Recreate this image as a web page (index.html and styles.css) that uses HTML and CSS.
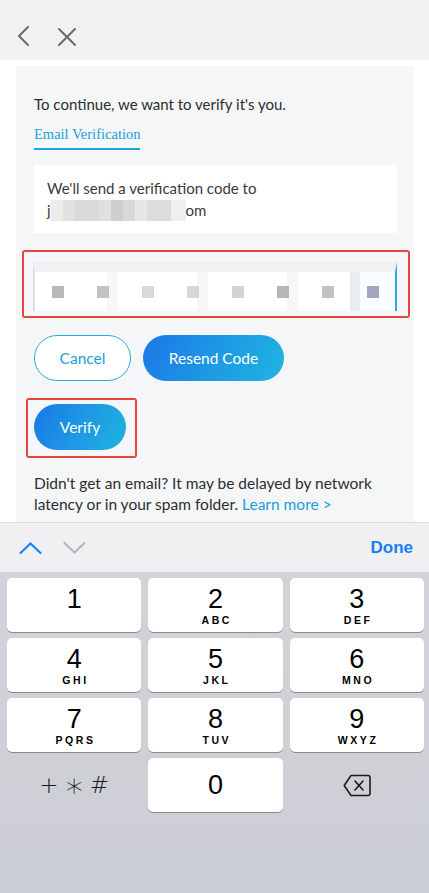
FILE: index.html
```html
<!DOCTYPE html>
<html lang="en">
<head>
    <meta charset="UTF-8">
    <meta name="viewport" content="width=device-width, initial-scale=1.0">
    <title>Verify it's you</title>
    <link rel="stylesheet" href="styles.css">
</head>
<body>

<div class="screen">
    <!-- Barra superior -->
    <header class="topbar">
        <button class="icon-btn" type="button" aria-label="Back">
            <svg width="14" height="22" viewBox="0 0 14 22"><polyline points="12,2 3,11 12,20" fill="none" stroke="#6b6b6b" stroke-width="2" stroke-linecap="round" stroke-linejoin="round"/></svg>
        </button>
        <button class="icon-btn" type="button" aria-label="Close">
            <svg width="20" height="20" viewBox="0 0 20 20"><path d="M2 2 L18 18 M18 2 L2 18" fill="none" stroke="#6b6b6b" stroke-width="2" stroke-linecap="round"/></svg>
        </button>
    </header>

    <main class="content">
        <div class="card">
            <p class="intro">To continue, we want to verify it's you.</p>
            <div class="tabs">
                <span class="tab active">Email Verification</span>
            </div>

            <div class="notice">
                <p>We'll send a verification code to</p>
                <p>j<span class="blurred"></span>om</p>
            </div>

            <!-- Campo del código -->
            <div class="highlight code-box">
                <div class="code">
                    <div class="cell"><span class="dot d1"></span></div>
                    <div class="cell alt"><span class="dot d2"></span></div>
                    <div class="cell"><span class="dot d3"></span></div>
                    <div class="cell alt"><span class="dot d4"></span></div>
                    <div class="cell"><span class="dot d5"></span></div>
                    <div class="cell alt"><span class="dot d6"></span></div>
                    <div class="cell"><span class="dot d7"></span></div>
                    <div class="cell last"><span class="dot d8"></span></div>
                </div>
            </div>

            <div class="actions">
                <button class="btn btn-outline" type="button">Cancel</button>
                <button class="btn btn-primary" type="button">Resend Code</button>
            </div>

            <div class="highlight verify-box">
                <button class="btn btn-primary btn-verify" type="button">Verify</button>
            </div>

            <p class="help">Didn't get an email? It may be delayed by network latency or in your spam folder. <a href="#" class="link">Learn more &gt;</a></p>
        </div>
    </main>

    <!-- Teclado numérico -->
    <div class="keyboard">
        <div class="toolbar">
            <div class="arrows">
                <svg width="23" height="12" viewBox="0 0 23 12"><polyline points="1.5,11 11.5,1.5 21.5,11" fill="none" stroke="#147efb" stroke-width="2" stroke-linecap="round"/></svg>
                <svg width="23" height="12" viewBox="0 0 23 12"><polyline points="1.5,1 11.5,10.5 21.5,1" fill="none" stroke="#b4b4b8" stroke-width="2" stroke-linecap="round"/></svg>
            </div>
            <span class="done">Done</span>
        </div>
        <div class="keys">
            <div class="key"><span class="num">1</span></div>
            <div class="key"><span class="num">2</span><span class="letters">ABC</span></div>
            <div class="key"><span class="num">3</span><span class="letters">DEF</span></div>
            <div class="key"><span class="num">4</span><span class="letters">GHI</span></div>
            <div class="key"><span class="num">5</span><span class="letters">JKL</span></div>
            <div class="key"><span class="num">6</span><span class="letters">MNO</span></div>
            <div class="key"><span class="num">7</span><span class="letters">PQRS</span></div>
            <div class="key"><span class="num">8</span><span class="letters">TUV</span></div>
            <div class="key"><span class="num">9</span><span class="letters">WXYZ</span></div>
            <div class="key flat"><span class="symbols">+<span class="star">∗</span>#</span></div>
            <div class="key zero"><span class="num">0</span></div>
            <div class="key flat">
                <svg width="28" height="23" viewBox="0 0 28 23"><path d="M8 1.5 H25 a2 2 0 0 1 2 2 V19.5 a2 2 0 0 1 -2 2 H8 L1.2 11.5 Z" fill="none" stroke="#1c1c1e" stroke-width="1.6" stroke-linejoin="round"/><path d="M12 7 L20 16 M20 7 L12 16" stroke="#1c1c1e" stroke-width="1.6" stroke-linecap="round"/></svg>
            </div>
        </div>
    </div>
</div>

</body>
</html>
```

FILE: styles.css
```css
* {
    box-sizing: border-box;
}
body {
    margin: 0;
    background-color: #fff;
    font-family: Lato, "Noto Sans", sans-serif;
    color: #333;
}
p {
    margin: 0;
}
.screen {
    width: 429px;
    height: 893px;
    display: flex;
    flex-direction: column;
    overflow: hidden;
}
.topbar {
    height: 60px;
    flex-shrink: 0;
    background-color: #f1f1f3;
    display: flex;
    align-items: flex-end;
    gap: 27px;
    padding: 0 0 13px 16px;
}
.icon-btn {
    background: none;
    border: none;
    padding: 0;
    display: flex;
    cursor: pointer;
}
.content {
    flex: 1;
    overflow: hidden;
    padding: 6px 15px 0 16px;
}
.card {
    background-color: #f5f6f8;
    padding: 28px 17px 0 18px;
    min-height: 100%;
}
.intro {
    font-size: 15px;
    line-height: 20px;
    color: #2e2e2e;
}
.tabs {
    margin-top: 10px;
    display: flex;
}
.tab {
    font-family: "Liberation Serif", serif;
    font-size: 14.5px;
    line-height: 20px;
    color: #1a9fdc;
    padding-bottom: 4px;
    border-bottom: 2px solid #1aa8e0;
}
.notice {
    margin-top: 15px;
    background-color: #fff;
    padding: 12px 13px;
    font-size: 15px;
    line-height: 22px;
    color: #3a3a3a;
}
.blurred {
    display: inline-block;
    width: 135px;
    height: 21px;
    vertical-align: -5px;
    background: linear-gradient(90deg, #ececec 0 12px, #e2e2e2 12px 24px, #dadada 24px 48px, #e0e0e0 48px 60px, #cfcfcf 60px 72px, #d8d8d8 72px 84px, #e6e6e6 84px 96px, #dcdcdc 96px 120px, #efefef 120px 135px);
}
.highlight {
    border: 2px solid #e8453c;
    border-radius: 3px;
}
.code-box {
    margin: 17px -13px 0 -12px;
    padding: 10px 11px 5px 9px;
}
.code {
    display: grid;
    grid-template-columns: repeat(8, 1fr);
    height: 49px;
    border-top: 10px solid #eff1f3;
    border-left: 2px solid #dcdee2;
    border-right: 2px solid #2aa8e8;
    background-color: #fff;
}
.cell {
    display: flex;
    align-items: center;
    justify-content: center;
}
.cell.alt {
    background: linear-gradient(90deg, #fff 0 60%, #f7f7f7 60% 85%, #fff 85%);
}
.cell.last {
    background: linear-gradient(90deg, #e6edf3 0 22%, #fafdff 22%);
}
.dot {
    width: 12px;
    height: 12px;
    background-color: #b8b8b8;
}
.d2 { background-color: #c2c2c2; }
.d3 { background-color: #d9d9d9; }
.d4 { background-color: #d6d6d6; }
.d5 { background-color: #d2d2d2; }
.d6 { background-color: #b6b6b6; }
.d7 { background-color: #c2c2c2; }
.d8 { background-color: #a3a6c0; }
.actions {
    margin-top: 17px;
    display: flex;
    gap: 12px;
}
.btn {
    height: 46px;
    border-radius: 23px;
    font-family: Lato, "Noto Sans", sans-serif;
    font-size: 15.5px;
    cursor: pointer;
    padding: 0;
}
.btn-outline {
    width: 97px;
    background-color: #fff;
    border: 1.5px solid #2aa8df;
    color: #1a9fdc;
}
.btn-primary {
    width: 141px;
    border: none;
    color: #fff;
    background: linear-gradient(115deg, #1b78e8 0%, #1e9be3 55%, #1fb4df 100%);
}
.verify-box {
    margin: 17px 0 0 -8px;
    width: 111px;
    padding: 4px 9px 6px 6px;
}
.btn-verify {
    width: 92px;
    display: block;
}
.help {
    margin-top: 15px;
    font-size: 15.5px;
    line-height: 21px;
    color: #2e2e2e;
}
.link {
    color: #1a9fdc;
    text-decoration: none;
}
.keyboard {
    height: 371px;
    flex-shrink: 0;
    background: linear-gradient(180deg, #d2d4d9 0%, #cbced4 100%);
    font-family: "Liberation Sans", Arial, sans-serif;
}
.toolbar {
    height: 50px;
    background-color: #f0f0f2;
    border-top: 1px solid #dcdcde;
    display: flex;
    align-items: center;
    justify-content: space-between;
    padding: 0 16px 0 19px;
}
.arrows {
    display: flex;
    gap: 21px;
}
.done {
    color: #147efb;
    font-weight: bold;
    font-size: 17px;
}
.keys {
    display: grid;
    grid-template-columns: repeat(3, 1fr);
    column-gap: 7px;
    row-gap: 6px;
    padding: 6px 5px 0 7px;
}
.key {
    height: 54px;
    background-color: #fff;
    border-radius: 5px;
    box-shadow: 0 1px 0 #898a8d;
    display: flex;
    flex-direction: column;
    align-items: center;
    padding-top: 8px;
}
.key.flat {
    background: none;
    box-shadow: none;
    justify-content: center;
    padding-top: 0;
}
.key.zero {
    justify-content: center;
    padding-top: 0;
}
.num {
    font-size: 27px;
    line-height: 26px;
    color: #000;
}
.letters {
    font-size: 10.5px;
    font-weight: bold;
    letter-spacing: 2.6px;
    margin-right: -2.6px;
    line-height: 12px;
    margin-top: 2px;
    color: #000;
}
.symbols {
    display: flex;
    align-items: center;
    gap: 5px;
    font-family: "DejaVu Sans", sans-serif;
    font-size: 23px;
    font-weight: 300;
    color: #1c1c1e;
    line-height: 24px;
}
.star {
    font-size: 34px;
    line-height: 24px;
}
```
